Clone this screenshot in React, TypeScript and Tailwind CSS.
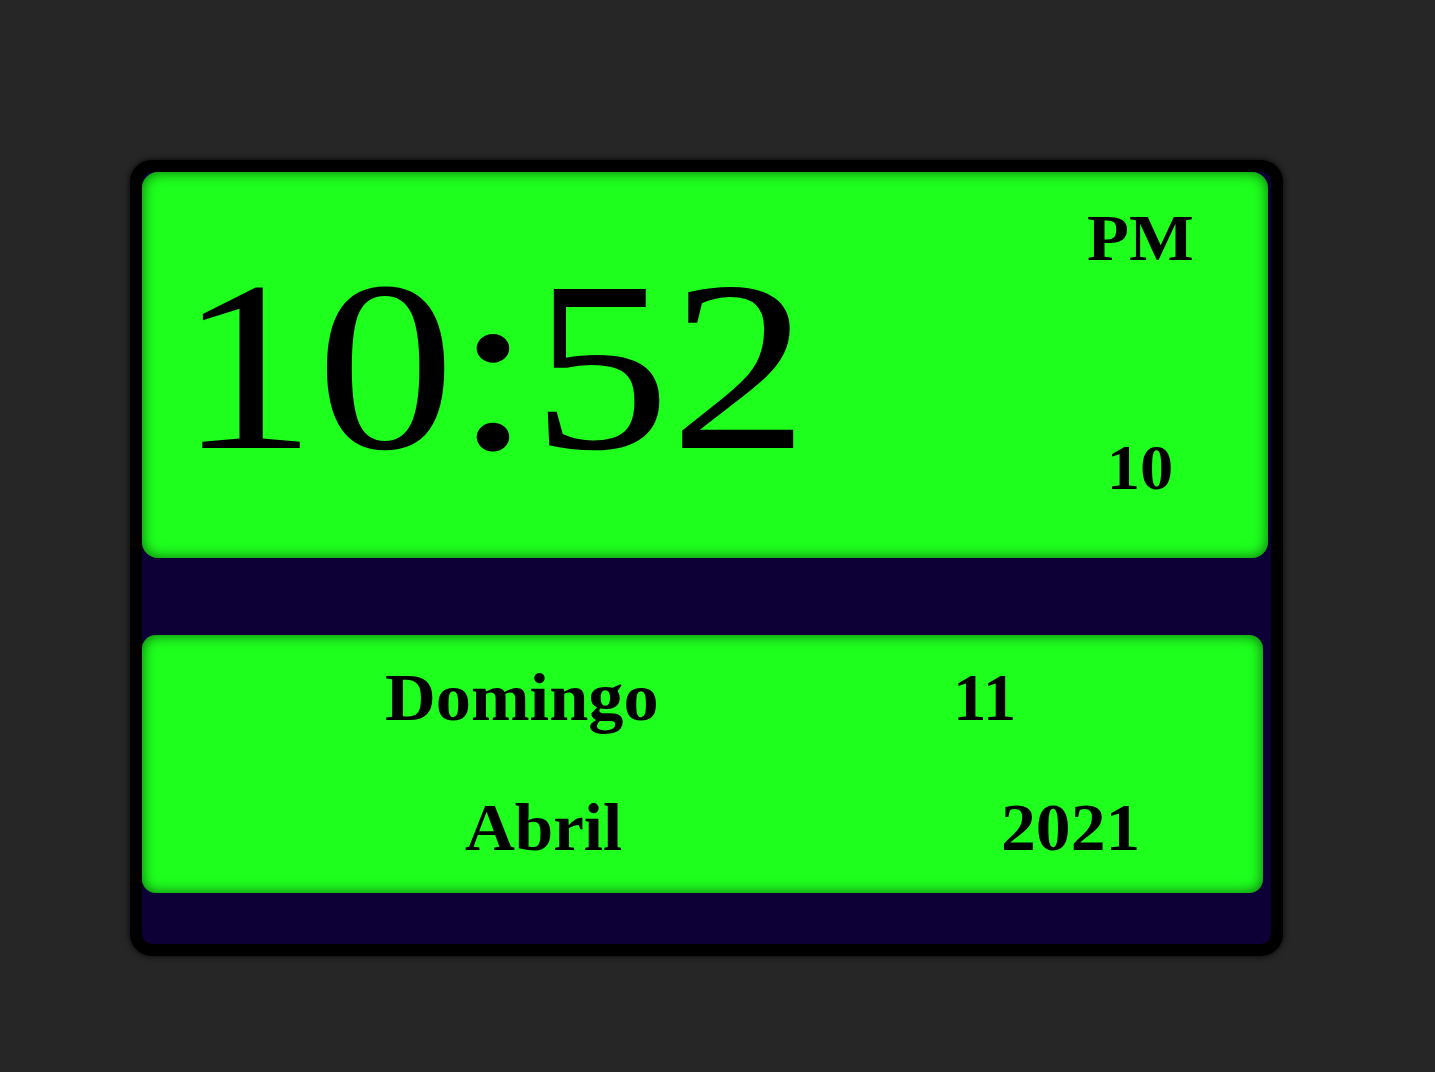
import React from "react";

export default function App() {
  const serif = { fontFamily: '"Liberation Serif", "Times New Roman", serif' };
  return (
    <div className="w-[1435px] h-[1072px] bg-[#262626] pt-[160px] pl-[130px]" style={serif}>
      <div className="w-[1153px] h-[796px] rounded-[22px] border-[12px] border-black bg-[#0c0036] shadow-[0_0_6px_rgba(0,0,0,0.9)] flex flex-col">
        <div className="w-[1126px] h-[386px] rounded-[16px] bg-[#1eff1e] shadow-[inset_0_0_14px_rgba(0,0,0,0.6)] flex justify-between text-black">
          <div className="pt-[73px] pl-[36px]">
            <div className="text-[243px] leading-none origin-left scale-x-[1.139]">10:52</div>
          </div>
          <div className="w-[104px] mr-[76px] flex flex-col items-center justify-between pt-[33px] pb-[58px] font-bold">
            <div className="text-[66px] leading-none scale-x-[1.04]">PM</div>
            <div className="text-[64px] leading-none scale-x-[1.04]">10</div>
          </div>
        </div>
        <div className="mt-[77px] w-[1121px] h-[258px] rounded-[14px] bg-[#1eff1e] shadow-[inset_0_0_14px_rgba(0,0,0,0.6)] flex flex-col pt-[29px] font-bold text-[67px] leading-none text-black">
          <div className="flex pl-[243px]">
            <span className="w-[568px]"><span className="inline-block origin-left scale-x-[1.05]">Domingo</span></span>
            <span className="inline-block origin-left">11</span>
          </div>
          <div className="flex pl-[323px] mt-[63px]">
            <span className="w-[536px]"><span className="inline-block origin-left scale-x-[1.03]">Abril</span></span>
            <span className="inline-block origin-left scale-x-[1.04]">2021</span>
          </div>
        </div>
      </div>
    </div>
  );
}
